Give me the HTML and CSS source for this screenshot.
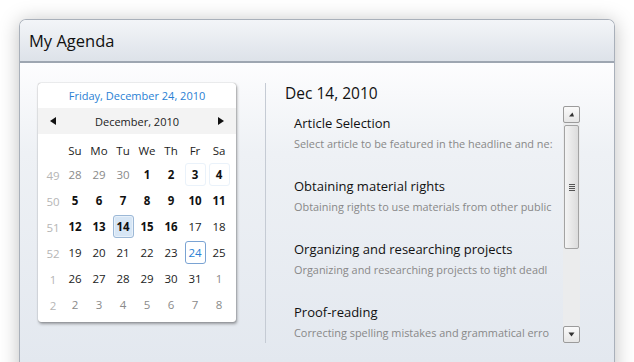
FILE: index.html
```html
<!DOCTYPE html>
<html>
<head>
<meta charset="utf-8">
<link rel="stylesheet" href="styles.css">
</head>
<body>
<div class="window">
  <div class="win-header">My Agenda</div>
  <div class="win-body">
    <div class="left">
      <div class="calendar">
        <div class="cal-today">Friday, December 24, 2010</div>
        <div class="cal-nav">
          <span class="arrow arrow-left"></span>
          <span class="cal-month">December, 2010</span>
          <span class="arrow arrow-right"></span>
        </div>
        <div class="cal-grid">
          <span></span><span class="dn">Su</span><span class="dn">Mo</span><span class="dn">Tu</span><span class="dn">We</span><span class="dn">Th</span><span class="dn">Fr</span><span class="dn">Sa</span>

          <span class="wk">49</span><span class="d om">28</span><span class="d om">29</span><span class="d om">30</span><span class="d b">1</span><span class="d b">2</span><span class="d b faint">3</span><span class="d b faint">4</span>
          <span class="wk">50</span><span class="d b">5</span><span class="d b">6</span><span class="d b">7</span><span class="d b">8</span><span class="d b">9</span><span class="d b">10</span><span class="d b">11</span>
          <span class="wk">51</span><span class="d b">12</span><span class="d b">13</span><span class="d b sel">14</span><span class="d b">15</span><span class="d b">16</span><span class="d">17</span><span class="d">18</span>
          <span class="wk">52</span><span class="d">19</span><span class="d">20</span><span class="d">21</span><span class="d">22</span><span class="d">23</span><span class="d today">24</span><span class="d">25</span>
          <span class="wk">1</span><span class="d">26</span><span class="d">27</span><span class="d">28</span><span class="d">29</span><span class="d">30</span><span class="d">31</span><span class="d om">1</span>
          <span class="wk">2</span><span class="d om">2</span><span class="d om">3</span><span class="d om">4</span><span class="d om">5</span><span class="d om">6</span><span class="d om">7</span><span class="d om">8</span>
        </div>
      </div>
    </div>
    <div class="right">
      <div class="date-title">Dec 14, 2010</div>
      <div class="list-wrap">
        <div class="list">
          <div class="item">
            <div class="item-title">Article Selection</div>
            <div class="item-desc">Select article to be featured in the headline and ne:</div>
          </div>
          <div class="item">
            <div class="item-title">Obtaining material rights</div>
            <div class="item-desc">Obtaining rights to use materials from other public</div>
          </div>
          <div class="item">
            <div class="item-title">Organizing and researching projects</div>
            <div class="item-desc">Organizing and researching projects to tight deadl</div>
          </div>
          <div class="item">
            <div class="item-title">Proof-reading</div>
            <div class="item-desc">Correcting spelling mistakes and grammatical erro</div>
          </div>
        </div>
        <div class="scrollbar">
          <div class="sb-btn"><svg width="7" height="5" viewBox="0 0 7 5"><path d="M1 4.5 L4.5 0.5 L6 4.5 Z" fill="#333"/></svg></div>
          <div class="sb-thumb"><span class="grip"></span></div>
          <div class="sb-track"></div>
          <div class="sb-btn"><svg width="7" height="5" viewBox="0 0 7 5"><path d="M0.5 0.5 L6.5 0.5 L3.5 4.5 Z" fill="#333"/></svg></div>
        </div>
      </div>
    </div>
  </div>
</div>
</body>
</html>
```
FILE: styles.css
```css
html, body {
  margin: 0;
  padding: 0;
  background: #fff;
  overflow: hidden;
  height: 362px;
}
body {
  font-family: "Open Sans", "DejaVu Sans", sans-serif;
  color: #111;
  padding: 19px 0 0 19px;
  box-sizing: border-box;
}
.window {
  width: 596px;
  height: 360px;
  border: 1px solid #a9b0ba;
  border-bottom: none;
  border-radius: 7px 7px 0 0;
  box-shadow: 0 2px 20px rgba(0,0,0,0.25);
  display: flex;
  flex-direction: column;
  overflow: hidden;
  box-sizing: border-box;
}
.win-header {
  height: 41px;
  flex: none;
  background: linear-gradient(#f3f5f8, #dde2e9);
  border-bottom: 2px solid #9ea6b1;
  font-size: 16.5px;
  line-height: 42px;
  padding-left: 9px;
  color: #111;
}
.win-body {
  flex: 1;
  display: flex;
  background: linear-gradient(#fdfdfe 0px, #eef1f5 90px, #e3e8ef 300px);
  padding: 20px 0 0 18px;
}
.left {
  width: 227px;
  flex: none;
  border-right: 1px solid #c5cbd4;
  height: 260px;
}
.calendar {
  width: 198px;
  height: 239px;
  background: #fff;
  border-radius: 3px;
  box-shadow: 0 0 1px rgba(0,0,0,0.5), 1px 2px 3px rgba(0,0,0,0.35);
  box-sizing: border-box;
}
.cal-today {
  height: 25px;
  line-height: 26px;
  text-align: center;
  font-size: 11px;
  color: #2a7fd4;
}
.cal-nav {
  height: 26px;
  background: #f3f3f3;
  display: flex;
  align-items: center;
  justify-content: space-between;
  padding: 0 12px 0 12px;
  font-size: 11px;
  color: #222;
}
.arrow {
  width: 0;
  height: 0;
  border-top: 4.5px solid transparent;
  border-bottom: 4.5px solid transparent;
}
.arrow-left { border-right: 6px solid #111; }
.arrow-right { border-left: 6px solid #111; }
.cal-grid {
  display: grid;
  grid-template-columns: 20px repeat(7, 24px);
  grid-template-rows: 28px repeat(6, 26px);
  padding: 0 5px;
  font-size: 11.5px;
  text-align: center;
}
.cal-grid > span {
  display: flex;
  align-items: center;
  justify-content: center;
  box-sizing: border-box;
}
.dn {
  color: #222;
  padding-top: 4px;
}
.wk {
  color: #b5b5b5;
}
.d {
  margin: 1px 1.5px 2px 1.5px;
  border: 1px solid transparent;
  border-radius: 3px;
  color: #222;
}
.d.b {
  font-weight: bold;
  color: #111;
}
.d.om {
  color: #8a8a8a;
}
.d.faint {
  border-color: #eaf2fa;
}
.d.sel {
  background: #d7e6f5;
  border: 1px solid #9cb8d6;
  box-shadow: inset 0 0 0 1px #e8f1fa;
}
.d.today {
  border: 1px solid #7aa3d3;
  color: #2a7fd4;
}
.right {
  flex: 1;
  padding-left: 19px;
  display: flex;
  flex-direction: column;
  min-width: 0;
}
.date-title {
  font-size: 15.5px;
  margin-top: 0px;
  line-height: 20px;
  color: #111;
}
.list-wrap {
  display: flex;
  margin-top: 3px;
}
.list {
  width: 259px;
  padding-left: 9px;
  overflow: hidden;
  flex: none;
}
.item {
  height: 63px;
}
.item-title {
  font-size: 13px;
  line-height: 17px;
  padding-top: 9px;
  white-space: nowrap;
  color: #111;
}
.item-desc {
  font-size: 10.9px;
  color: #888;
  line-height: 14px;
  margin-top: 5px;
  white-space: nowrap;
}
.scrollbar {
  margin-left: 10px;
  width: 17px;
  height: 237px;
  display: flex;
  flex-direction: column;
  background: #ebeced;
}
.sb-btn {
  height: 17px;
  box-sizing: border-box;
  border: 1px solid #9b9b9b;
  border-radius: 2px;
  background: linear-gradient(#fafafa, #e6e6e6);
  display: flex;
  align-items: center;
  justify-content: center;
  flex: none;
}
.sb-thumb {
  margin: 2px 1px 0 1px;
  height: 124px;
  box-sizing: border-box;
  border: 1px solid #a3a3a3;
  border-radius: 2px;
  background: linear-gradient(90deg, #f4f4f4, #dcdcdc);
  display: flex;
  align-items: center;
  justify-content: center;
  flex: none;
}
.grip {
  width: 6px;
  height: 7px;
  background: repeating-linear-gradient(#555 0 1px, transparent 1px 2px);
}
.sb-track {
  flex: 1;
}
```
